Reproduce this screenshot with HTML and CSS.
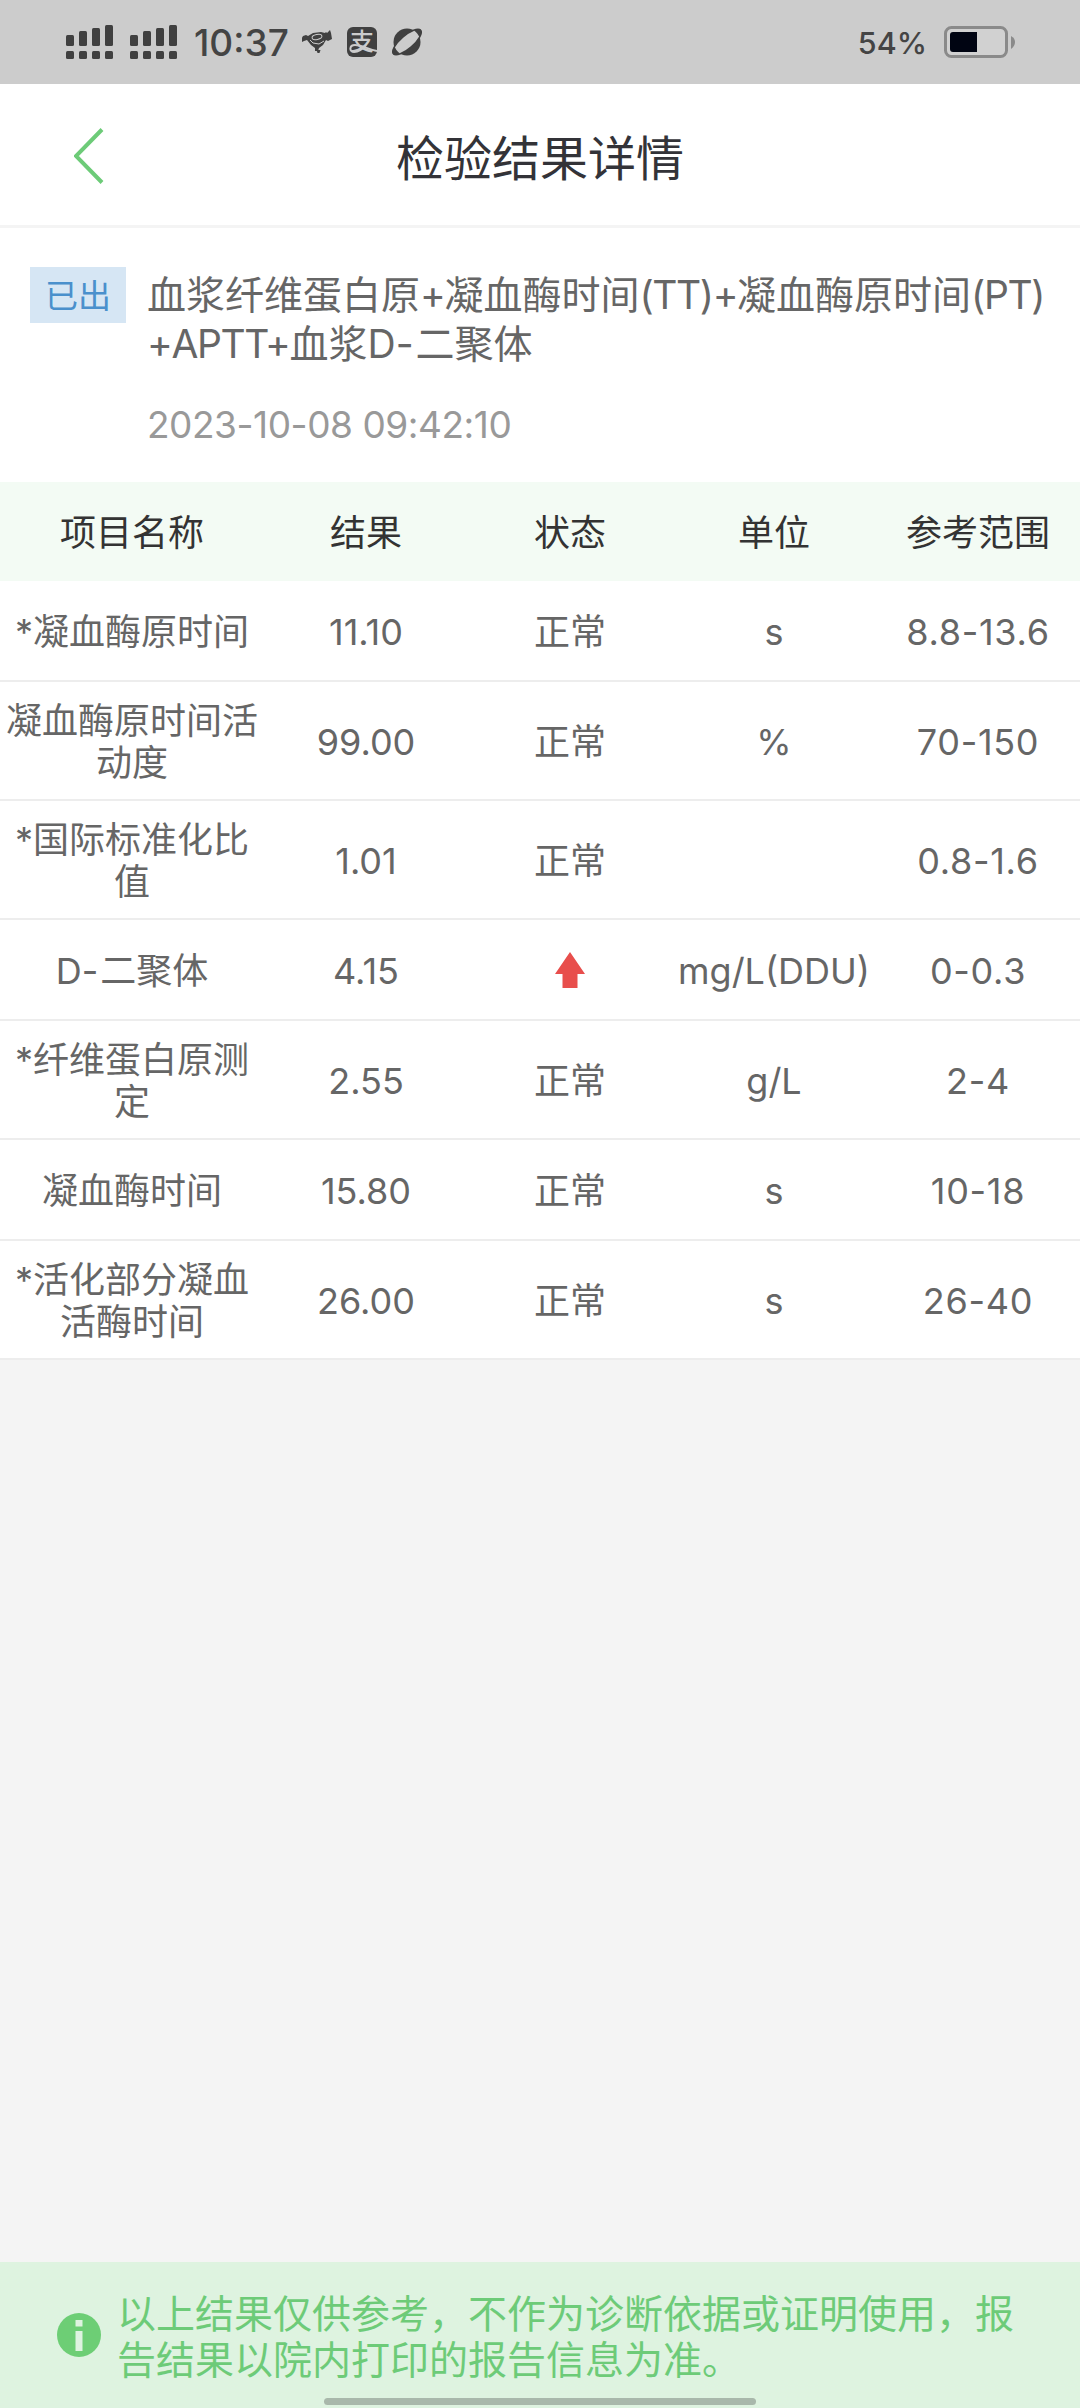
FILE: index.html
```
<!DOCTYPE html>
<html lang="zh-CN">
<head>
    <meta charset="UTF-8">
    <title>检验结果详情</title>
    <link rel="stylesheet" href="styles.css">
</head>
<body>
    <div class="status-bar">
        <svg class="signal" width="112" height="34" viewBox="0 0 112 34">
            <g id="sim">
                <rect x="0" y="10" width="8" height="11" rx="1.5"/>
                <rect x="13" y="6" width="8" height="15" rx="1.5"/>
                <rect x="26" y="3" width="8" height="18" rx="1.5"/>
                <rect x="39" y="0" width="8" height="21" rx="1.5"/>
                <rect x="0" y="26" width="8" height="8" rx="1.5"/>
                <rect x="13" y="26" width="8" height="8" rx="1.5"/>
                <rect x="26" y="26" width="8" height="8" rx="1.5"/>
                <rect x="39" y="26" width="8" height="8" rx="1.5"/>
            </g>
            <use href="#sim" x="64"/>
        </svg>
        <span class="time">10:37</span>
        <svg class="app-icon" width="30" height="30" viewBox="0 0 30 30">
            <path d="M1 9l3-1 2 1 5-3 8-1 4 1 1-1 1 1 3-3 1 3 1 6-4 2-2-1-3 5-4 3-1 3h-3v-3l-4-3-4-5-3 1-2 1-2-1z"/>
            <path d="M14.500 23h4l-1 3h-2z"/>
            <ellipse class="cut" cx="15" cy="10" rx="5" ry="2.500" transform="rotate(-12 15 10)"/>
            <path class="cut" d="M8 13l3 3 6 1 5-3"/>
        </svg>
        <svg class="app-icon" width="30" height="30" viewBox="0 0 30 30">
            <rect width="30" height="30" rx="6"/>
            <text class="pay" x="15" y="22.500" text-anchor="middle">支</text>
            <path class="swoosh" d="M19 18C15 23 11 25 7 25c-5 0-5-7 1-7 6 0 13 4 22 6"/>
        </svg>
        <svg class="app-icon" width="30" height="30" viewBox="0 0 30 30">
            <circle cx="15" cy="15" r="13.500"/>
            <ellipse class="ring" cx="15" cy="15" rx="18" ry="6.500" transform="rotate(-41 15 15)"/>
            <path d="M22 3.500q7-3 7.500.5.500 3-2 7Q26 6 22 3.500zM8 26.500q-7 3-7.500-.5-.5-3 2-7Q4 24 8 26.500z"/>
        </svg>
        <span class="percent">54%</span>
        <svg class="battery" width="72" height="32" viewBox="0 0 72 32">
            <rect class="shell" x="1.5" y="1.5" width="61" height="29" rx="6"/>
            <path class="level" d="M9 6h24v20H9a3 3 0 0 1-3-3V9a3 3 0 0 1 3-3z"/>
            <path class="cap" d="M67 10q4 2 4 6t-4 7z"/>
        </svg>
    </div>

    <div class="nav">
        <svg class="back" width="30" height="56" viewBox="0 0 30 56">
            <path d="M28 1.500L2 28l26 26.500"/>
        </svg>
        <h1>检验结果详情</h1>
    </div>

    <div class="summary">
        <span class="badge">已出</span>
        <div class="summary-text">
            <div class="name">血浆纤维蛋白原<span class="latin">+</span>凝血酶时间<span class="latin">(TT)+</span>凝血酶原时间<span class="latin">(PT)</span><br><span class="latin">+APTT+</span>血浆D<span class="dash">-</span>二聚体</div>
            <div class="date">2023-10-08 09:42:10</div>
        </div>
    </div>

    <table>
        <thead>
            <tr>
                <th class="item">项目名称</th>
                <th>结果</th>
                <th>状态</th>
                <th>单位</th>
                <th>参考范围</th>
            </tr>
        </thead>
        <tbody>
            <tr>
                <td>*凝血酶原时间</td>
                <td>11.10</td>
                <td>正常</td>
                <td>s</td>
                <td class="range">8.8-13.6</td>
            </tr>
            <tr class="two-line">
                <td>凝血酶原时间活动度</td>
                <td>99.00</td>
                <td>正常</td>
                <td>%</td>
                <td class="range">70-150</td>
            </tr>
            <tr class="two-line">
                <td>*国际标准化比值</td>
                <td>1.01</td>
                <td>正常</td>
                <td></td>
                <td class="range">0.8-1.6</td>
            </tr>
            <tr>
                <td>D<span class="dash">-</span>二聚体</td>
                <td>4.15</td>
                <td>
                    <svg class="up" width="30" height="36" viewBox="0 0 30 36">
                        <path d="M15 0l15 22h-7.500v14h-15V22H0z"/>
                    </svg>
                </td>
                <td>mg/L(DDU)</td>
                <td class="range">0-0.3</td>
            </tr>
            <tr class="two-line">
                <td>*纤维蛋白原测定</td>
                <td>2.55</td>
                <td>正常</td>
                <td>g/L</td>
                <td class="range">2-4</td>
            </tr>
            <tr>
                <td>凝血酶时间</td>
                <td>15.80</td>
                <td>正常</td>
                <td>s</td>
                <td class="range">10-18</td>
            </tr>
            <tr class="two-line">
                <td>*活化部分凝血活酶时间</td>
                <td>26.00</td>
                <td>正常</td>
                <td>s</td>
                <td class="range">26-40</td>
            </tr>
        </tbody>
    </table>

    <div class="notice">
        <svg class="info" width="44" height="44" viewBox="0 0 44 44">
            <circle cx="22" cy="22" r="22"/>
            <path d="M18.500 7h7v6.500h-7zM18.500 18h7v20h-7z"/>
        </svg>
        <p>以上结果仅供参考，不作为诊断依据或证明使用，报告结果以院内打印的报告信息为准。</p>
        <div class="home-bar"></div>
    </div>
</body>
</html>
```

FILE: styles.css
```
* {
    box-sizing: border-box;
}
body {
    margin: 0;
    width: 1080px;
    height: 2408px;
    display: flex;
    flex-direction: column;
    font-family: Inter, "Noto Sans CJK SC", sans-serif;
    background-color: #f4f4f4;
    color: #666;
}

/* 状态栏 */
.status-bar {
    height: 84px;
    flex: none;
    display: flex;
    align-items: center;
    padding: 0 64px 0 66px;
    background-color: #ccc;
    color: #444;
    fill: #404040;
}
.time {
    width: 92px;
    margin-left: 16px;
    margin-right: 16px;
    font-size: 37px;
    font-weight: 500;
    white-space: nowrap;
}
.app-icon {
    margin-right: 15px;
}
.cut {
    fill: none;
    stroke: #ccc;
    stroke-width: 1;
}
.pay {
    fill: #ccc;
    font-size: 24px;
    font-weight: 500;
}
.swoosh {
    fill: none;
    stroke: #ccc;
    stroke-width: 2;
}
.ring {
    fill: #ccc;
    stroke: #404040;
    stroke-width: 1.5;
}
.percent {
    margin-left: auto;
    margin-right: 17px;
    font-size: 30.5px;
    font-weight: 500;
}
.shell {
    fill: #d1d1d1;
    stroke: #8a8a8a;
    stroke-width: 3;
}
.level {
    fill: #000412;
}
.cap {
    fill: #8a8a8a;
}

/* 标题栏 */
.nav {
    position: relative;
    height: 144px;
    flex: none;
    display: flex;
    align-items: center;
    justify-content: center;
    background-color: #fff;
    border-bottom: 3px solid #f4f4f4;
}
.nav h1 {
    margin: 0;
    font-size: 48px;
    font-weight: 400;
    color: #333338;
}
.back {
    position: absolute;
    left: 74px;
    top: 44px;
    fill: none;
    stroke: #6dcb78;
    stroke-width: 4;
}

/* 报告概要 */
.summary {
    height: 254px;
    flex: none;
    display: flex;
    align-items: flex-start;
    padding: 39px 0 0 30px;
    background-color: #fff;
}
.badge {
    width: 96px;
    height: 56px;
    line-height: 58px;
    text-align: center;
    font-size: 33px;
    background-color: #d6e6f4;
    color: #4a90cc;
}
.summary-text {
    margin-left: 21px;
    font-size: 39px;
    white-space: nowrap;
}
.name {
    line-height: 49px;
    padding-top: 3px;
}
.latin {
    letter-spacing: -1.4px;
}
.dash {
    letter-spacing: 2px;
}
.date {
    margin-top: 32px;
    font-size: 37px;
    line-height: 49px;
    letter-spacing: -0.45px;
    color: #999;
}

/* 结果表格 */
table {
    width: 100%;
    flex: none;
    table-layout: fixed;
    border-collapse: separate;
    border-spacing: 0;
    background-color: #fff;
}
th, td {
    padding: 3px 5px 0;
    text-align: center;
    vertical-align: middle;
    font-size: 36px;
    font-weight: 400;
    line-height: 42px;
}
th {
    height: 99px;
    background-color: #f3fbf4;
    color: #333;
}
.item {
    width: 264px;
}
td {
    height: 101px;
    border-bottom: 2px solid #ededed;
}
.two-line td {
    height: 119px;
}
.range {
    letter-spacing: 0.7px;
}
.up {
    display: block;
    margin: -2px auto 0;
    fill: #e84e4c;
}

/* 底部提示 */
.notice {
    position: relative;
    height: 146px;
    margin-top: auto;
    flex: none;
    display: flex;
    align-items: flex-start;
    padding: 29px 50px 0 57px;
    background-color: #def3e0;
    color: #6dcb78;
}
.info {
    flex: none;
    margin-top: 22px;
    fill: #6dce75;
}
.info path {
    fill: #def3e0;
}
.notice p {
    margin: 0 0 0 16px;
    font-size: 39px;
    line-height: 46px;
}
.home-bar {
    position: absolute;
    left: 324px;
    bottom: 3px;
    width: 432px;
    height: 7px;
    border-radius: 4px;
    background-color: #a9b8ab;
}
```
